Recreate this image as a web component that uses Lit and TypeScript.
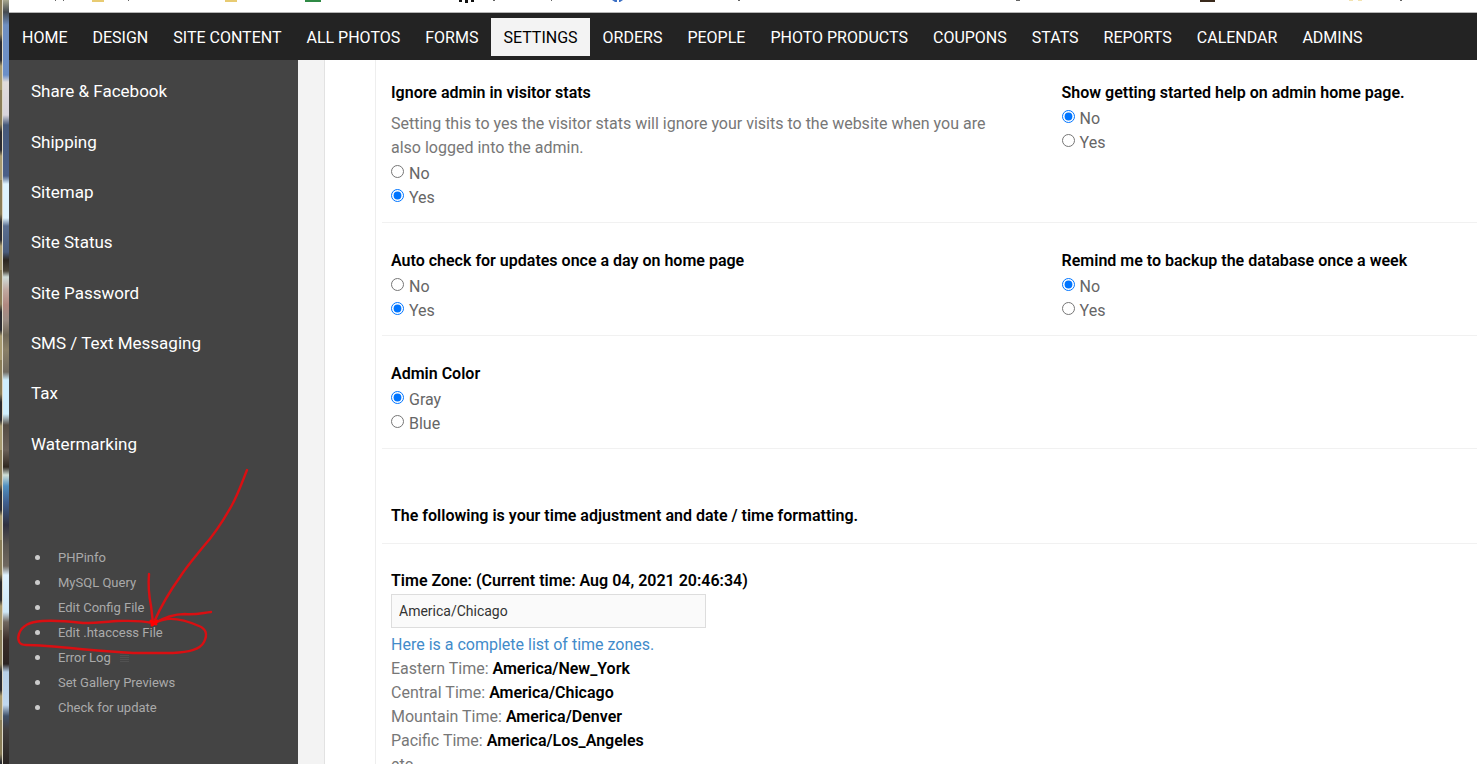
import { LitElement, html, css, svg } from "lit";
import { customElement, property } from "lit/decorators.js";

const NAV = [
  "HOME", "DESIGN", "SITE CONTENT", "ALL PHOTOS", "FORMS", "SETTINGS", "ORDERS", "PEOPLE",
  "PHOTO PRODUCTS", "COUPONS", "STATS", "REPORTS", "CALENDAR", "ADMINS",
];

const SECTIONS = [
  "Share & Facebook", "Shipping", "Sitemap", "Site Status", "Site Password",
  "SMS / Text Messaging", "Tax", "Watermarking",
];

const TOOLS = [
  "PHPinfo", "MySQL Query", "Edit Config File", "Edit .htaccess File",
  "Error Log", "Set Gallery Previews", "Check for update",
];

const ZONES = [
  ["Eastern Time:", "America/New_York"],
  ["Central Time:", "America/Chicago"],
  ["Mountain Time:", "America/Denver"],
  ["Pacific Time:", "America/Los_Angeles"],
];

@customElement("radio-setting")
class RadioSetting extends LitElement {
  @property() heading = "";
  @property() description = "";
  @property() selected = "";
  @property({ attribute: false }) options: string[] = [];

  static styles = css`
    :host { display: block; }
    fieldset { border: 0; margin: 0; padding: 0; min-width: 0; }
    legend { padding: 0; color: #000; font-weight: 600; }
    p { margin: 7px 0 0; color: #777; }
    .options { padding-top: 2px; color: #666; }
    label { display: flex; align-items: center; gap: 5px; }
    input { width: 13px; height: 13px; margin: 0 0 6px; accent-color: #0075ff; }
  `;

  render() {
    return html`<fieldset>
      <legend>${this.heading}</legend>
      ${this.description ? html`<p>${this.description}</p>` : ""}
      <div class="options">
        ${this.options.map((o) => html`<label>
          <input type="radio" name="choice" value=${o} ?checked=${o === this.selected}>${o}
        </label>`)}
      </div>
    </fieldset>`;
  }
}

@customElement("app-root")
class AppRoot extends LitElement {
  static styles = css`
    * { box-sizing: border-box; }
    :host {
      display: grid;
      grid-template-columns: 9px minmax(0, 1fr);
      position: relative;
      height: 100vh;
      overflow: hidden;
      background: #fff;
      color: #777;
      font: 16px/24px Roboto, "Liberation Sans", sans-serif;
    }
    a { color: inherit; text-decoration: none; }
    ul { list-style: none; margin: 0; padding: 0; }

    .desktop { display: grid; grid-template-columns: 2px 1px 6px; }
    .edge { background: repeating-linear-gradient(#8a7d58 0 34px, #2c2c30 42px 60px, #a79a70 66px 90px); }
    .line { background: #ddd8c8; }
    .photo {
      background: linear-gradient(
        #a8a890 0, #444a50 12px, #6f8fc0 25px, #6b8fc8 75px, #e0dcdc 82px, #d8d4dc 115px,
        #46597a 125px, #4a5f88 176px, #dff4ff 184px, #dff4ff 218px, #5a6e90 226px, #4a5c7c 252px,
        #2c2620 260px, #4a4438 271px, #d0dcd8 277px, #c0a8a0 290px, #b08880 305px, #9a8c84 320px,
        #706858 335px, #8a8068 350px, #706a60 372px, #cfefff 380px, #cfefff 414px, #554c44 425px,
        #6a6058 450px, #302820 467px, #d0e0d8 475px, #5090c0 486px, #406090 502px, #303040 525px,
        #5a5550 545px, #706860 566px, #dff2ff 575px, #cfe8f8 612px, #70675f 622px, #3a2c28 640px,
        #2c2422 664px, #b8d0e8 672px, #c0d8f0 705px, #405068 716px, #403c3c 730px, #2a2422 764px);
    }

    .window { display: flex; flex-direction: column; min-width: 0; min-height: 0; }
    .bookmarks { flex: none; height: 13px; overflow: hidden; border-bottom: 1px solid #b5b5b5; }
    .bookmarks svg { display: block; }

    .nav { flex: none; height: 47px; padding: 5px 1px 0; background: #232323; }
    .nav ul { display: flex; gap: 1px; }
    .nav li { flex: none; }
    .nav a {
      display: block;
      padding: 8px 12px 6px;
      color: #fff;
      white-space: nowrap;
    }
    .nav .current { background: #f3f3f3; color: #000; }

    .body { flex: 1; min-height: 0; display: grid; grid-template-columns: 289px 27px minmax(0, 1fr); }
    .sidebar { background: #444; padding: 6px 22px 0; overflow: hidden; }
    .sections { display: grid; grid-auto-rows: 1fr; align-items: center; min-height: 403px; color: #fff; font-size: 17px; }
    .tools { padding-top: 76px; font-size: 13px; line-height: 25px; color: #aaa; }
    .tools li { display: flex; align-items: center; }
    .tools li::before {
      content: "";
      width: 5px;
      height: 5px;
      margin: 0 18px 0 4px;
      border-radius: 50%;
      background: #ccc;
    }
    .log { margin-left: 9px; }

    .gutter { background: #f3f3f3; border-right: 1px solid #e2e2e2; }
    main { min-width: 0; padding-left: 50px; overflow: hidden; }
    .settings { border-left: 1px solid #eee; padding-left: 6px; }
    .row {
      display: grid;
      grid-template-columns: minmax(0, 1.58fr) minmax(0, 1fr);
      padding: 26px 0 12px;
      border-bottom: 1px solid #f1f1f1;
    }
    .row:first-child { padding-top: 21px; }
    .cell { padding: 0 42px 0 9px; }
    .intro { margin: 0; padding: 55px 9px 15px; border-bottom: 1px solid #f1f1f1; }
    .intro, .zone label, strong { color: #000; font-size: 16px; font-weight: 600; }
    .zone { padding: 25px 9px 0; }
    .zone label { display: block; }
    .zone input {
      display: block;
      width: 315px;
      height: 34px;
      margin: 1px 0 5px;
      padding: 0 7px;
      border: 1px solid #ddd;
      background: #fafafa;
      color: #333;
      font: 14px Roboto, "Liberation Sans", sans-serif;
    }
    .zone a { color: #428bca; }

    .marker { position: absolute; left: 0; top: 460px; pointer-events: none; }
  `;

  private bookmarkIcons() {
    return html`<svg width="1460" height="3" aria-hidden="true">
      ${[[83, 12, "#e8cb72"], [216, 12, "#e8cb72"], [296, 16, "#2f8a45"], [1191, 15, "#3a2a1c"]].map(
        ([x, w, c]) => svg`<rect x=${x} y="0" width=${w} height="2" fill=${c}/>`)}
      <path d="M450 0h3v2h-3zM456 0h3v3h-3zM462 0h3v2h-3z" fill="#111"/>
      <path d="M603 0h11l-3 2h-1V0h-2v2h-2z" fill="#3b6fc4"/>
      <path d="M46 0h1v1h-1zM54 0h1v1h-1zM119 0h1v1h-1zM484 0h2v1h-2zM542 0h1v1h-1zM729 0h2v1h-2zM1007 0h4v1h-4zM1391 0h2v1h-2z" fill="#666"/>
      <path d="M1340 0h4v1h-4zM1349 0h4v1h-4z" fill="#f3e3b0"/>
    </svg>`;
  }

  private logIcon() {
    return html`<svg class="log" width="9" height="9" viewBox="0 0 9 9" aria-hidden="true">
      <path d="M0 .5h9M0 2.5h9M0 4.5h9M0 6.5h9M0 8.5h9" stroke="#515151"/>
    </svg>`;
  }

  render() {
    return html`
      <div class="desktop" aria-hidden="true">
        <div class="edge"></div><div class="line"></div><div class="photo"></div>
      </div>
      <div class="window">
        <div class="bookmarks">${this.bookmarkIcons()}</div>
        <nav class="nav"><ul>
          ${NAV.map((n) => html`<li><a href="#" class=${n === "SETTINGS" ? "current" : ""}>${n}</a></li>`)}
        </ul></nav>
        <div class="body">
          <aside class="sidebar">
            <ul class="sections">${SECTIONS.map((s) => html`<li><a href="#">${s}</a></li>`)}</ul>
            <ul class="tools">
              ${TOOLS.map((t) => html`<li><a href="#">${t}</a>${t === "Error Log" ? this.logIcon() : ""}</li>`)}
            </ul>
          </aside>
          <div class="gutter"></div>
          <main><div class="settings">
            <div class="row">
              <radio-setting class="cell" heading="Ignore admin in visitor stats"
                description="Setting this to yes the visitor stats will ignore your visits to the website when you are also logged into the admin."
                .options=${["No", "Yes"]} selected="Yes"></radio-setting>
              <radio-setting class="cell" heading="Show getting started help on admin home page."
                .options=${["No", "Yes"]} selected="No"></radio-setting>
            </div>
            <div class="row">
              <radio-setting class="cell" heading="Auto check for updates once a day on home page"
                .options=${["No", "Yes"]} selected="Yes"></radio-setting>
              <radio-setting class="cell" heading="Remind me to backup the database once a week"
                .options=${["No", "Yes"]} selected="No"></radio-setting>
            </div>
            <div class="row">
              <radio-setting class="cell" heading="Admin Color"
                .options=${["Gray", "Blue"]} selected="Gray"></radio-setting>
            </div>
            <h2 class="intro">The following is your time adjustment and date / time formatting.</h2>
            <div class="zone">
              <label for="zone">Time Zone: (Current time: Aug 04, 2021 20:46:34)</label>
              <input id="zone" type="text" value="America/Chicago">
              <a href="#">Here is a complete list of time zones.</a>
              ${ZONES.map(([label, zone]) => html`<div>${label} <strong>${zone}</strong></div>`)}
              <div>etc...</div>
            </div>
          </div></main>
        </div>
      </div>
      <svg class="marker" width="260" height="210" viewBox="0 460 260 210" fill="none"
        stroke="#d90f12" stroke-width="2.4" stroke-linecap="round" stroke-linejoin="round" aria-hidden="true">
        <path d="M247 470C241 485 238 494 232 505C222 523 214 535 203 547C195 557 187 566 180 577C170 591 161 606 154 622"/>
        <path d="M149 574C148 586 149 596 151 606L153 623"/>
        <path d="M211 612C202 613 195 615 185 614C173 614 163 618 153 624"/>
        <path d="M153 623C138 620 128 621 117 621C104 622 97 623 83 623C66 621 54 620 42 621C30 622 22 625 19 634C17 640 19 645 26 645C40 645 60 647 80 649C100 651 116 652 133 653H173C188 652 200 650 204 642C208 634 206 629 199 626C190 622 178 618 167 619C160 620 157 622 153 623Z"/>
        <path d="M151 621L156 624M152 625L157 621" stroke="#f00" stroke-width="3"/>
      </svg>`;
  }
}
